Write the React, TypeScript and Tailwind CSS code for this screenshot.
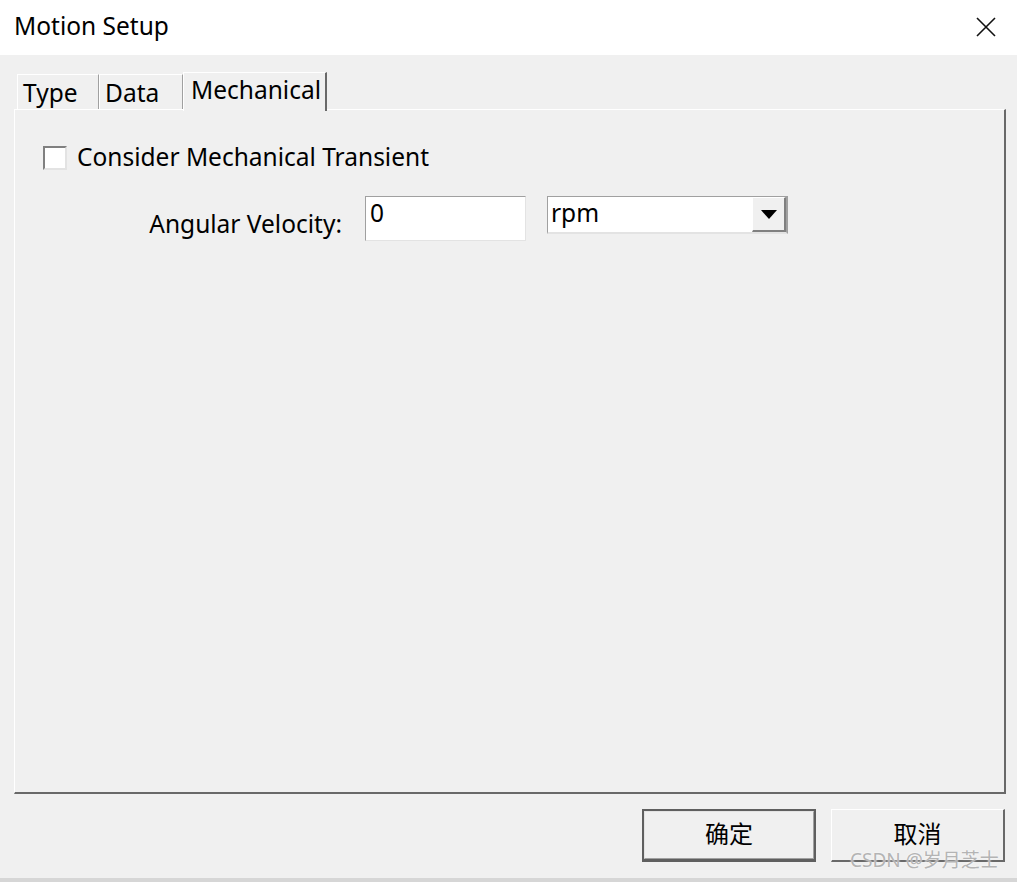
import React from 'react';

const font = { fontFamily: '"Noto Sans", "Noto Sans CJK SC", sans-serif' };

const Tab = ({ label, active, className = '' }: { label: string; active?: boolean; className?: string }) => (
  <div
    className={`flex items-start border-t border-l border-white ${
      active
        ? 'relative z-10 h-[39px] -mb-[2px] bg-[#f0f0f0] border-r-2 border-r-[#696969] px-[7px] pt-[1px]'
        : 'h-[35px] border-r border-r-[#a0a0a0] px-[5px] pt-[2px]'
    } ${className}`}
  >
    <span className="text-[24.5px] leading-[32px] text-black whitespace-nowrap">{label}</span>
  </div>
);

export default function App() {
  return (
    <div className="relative w-[1017px] h-[882px] flex flex-col bg-[#f0f0f0] overflow-hidden" style={font}>
      {/* title bar */}
      <div className="h-[55px] bg-white flex items-center justify-between pl-[14px] pr-[20px]">
        <span className="text-[24.5px] text-black leading-none -mt-[2px]">Motion Setup</span>
        <svg width="22" height="22" viewBox="0 0 22 22" className="-mt-[2px]">
          <path d="M2 2 L20 20 M20 2 L2 20" stroke="#111" strokeWidth="1.6" />
        </svg>
      </div>

      {/* tabs */}
      <div className="flex items-end pl-[17px] pt-[17px]">
        <Tab label="Type" className="w-[82px]" />
        <Tab label="Data" className="w-[84px]" />
        <Tab label="Mechanical" active className="w-[144px]" />
      </div>

      {/* panel */}
      <div className="ml-[14px] w-[992px] h-[685px] border-t border-l border-white border-r-2 border-b-2 border-r-[#696969] border-b-[#696969] pt-[36px] pl-[28px]">
        <div className="flex items-center gap-[10px]">
          <div className="w-[24px] h-[24px] bg-white border-t-2 border-l-2 border-[#808080] border-r-2 border-b-2 border-r-[#e3e3e3] border-b-[#e3e3e3]" />
          <span className="text-[24.5px] leading-none text-black -mt-[2px]">Consider Mechanical Transient</span>
        </div>

        <div className="flex items-start mt-[26px]">
          <span className="w-[299px] text-right text-[24.5px] text-black leading-none pt-[16px] whitespace-nowrap">Angular Velocity:</span>
          <div className="ml-[23px] w-[161px] h-[45px] bg-white border border-[#a0a0a0] border-r-[#e3e3e3] border-b-[#e3e3e3] pl-[4px] pt-[3px]">
            <span className="text-[24.5px] leading-[26px] text-black">0</span>
          </div>
          <div className="ml-[21px] w-[241px] h-[38px] bg-white border border-[#a0a0a0] border-r-2 border-b-2 border-r-[#a0a0a0] border-b-[#e3e3e3] flex items-center">
            <span className="flex-1 pl-[3px] text-[24.5px] leading-none text-black -mt-[3px]">rpm</span>
            <div className="w-[34px] h-full bg-[#f0f0f0] border-t border-l border-white border-r-2 border-b-2 border-r-[#808080] border-b-[#808080] flex items-center justify-center">
              <svg width="16" height="9" viewBox="0 0 16 9">
                <path d="M0 0 H16 L8 9 Z" fill="#000" />
              </svg>
            </div>
          </div>
        </div>
      </div>

      {/* buttons */}
      <div className="flex justify-end gap-[15px] pr-[12px] mt-[15px]">
        <div className="w-[174px] h-[53px] border-2 border-[#5f5f5f] border-b-[3px] bg-[#f0f0f0] flex items-center justify-center">
          <div className="w-full h-full border border-[#e3e3e3] border-r-[#a0a0a0] border-b-[#a0a0a0] flex items-center justify-center">
            <span className="text-[24px] text-black leading-none -mt-[2px]">确定</span>
          </div>
        </div>
        <div className="w-[174px] h-[53px] border-t border-l border-white border-r-2 border-b-2 border-r-[#696969] border-b-[#696969] bg-[#f0f0f0] flex items-center justify-center">
          <span className="text-[24px] text-black leading-none -mt-[2px]">取消</span>
        </div>
      </div>

      <div className="mt-auto h-[4px] bg-[#d6d6d6]" />

      {/* watermark */}
      <span className="absolute left-[850px] top-[851px] text-[19px] leading-none text-[#b4b4b4]" style={{ textShadow: '0 0 2px #fff' }}>
        CSDN @岁月芝士
      </span>
    </div>
  );
}
